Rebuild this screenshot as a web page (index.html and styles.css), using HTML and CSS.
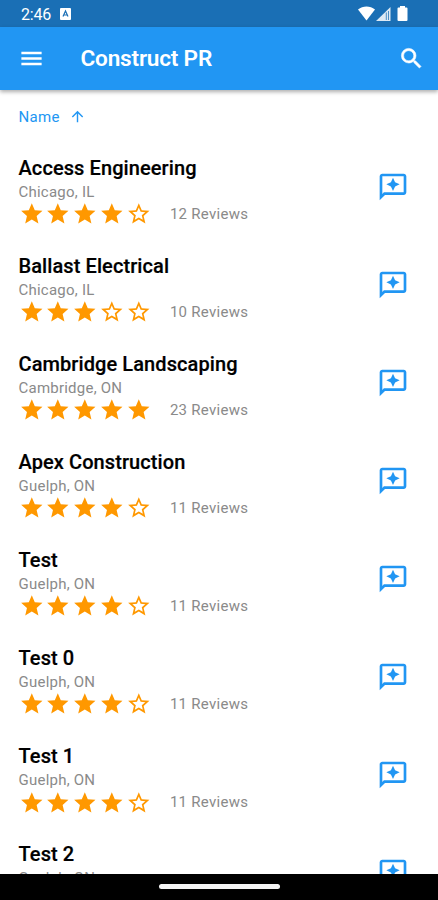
FILE: index.html
```html
<!DOCTYPE html>
<html lang="en">
<head>
<meta charset="utf-8">
<title>Construct PR</title>
<link rel="stylesheet" href="styles.css">
</head>
<body>
<svg class="defs" aria-hidden="true">
  <symbol id="star" viewBox="0 0 24 24"><path d="M12 17.27 18.18 21l-1.64-7.03L22 9.24l-7.19-.61L12 2 9.19 8.63 2 9.24l5.46 4.73L5.82 21z"/></symbol>
  <symbol id="star-o" viewBox="0 0 24 24"><path d="m22 9.24-7.19-.62L12 2 9.19 8.63 2 9.24l5.46 4.73L5.82 21 12 17.27 18.18 21l-1.63-7.03L22 9.24zM12 15.4l-3.76 2.27 1-4.28-3.32-2.88 4.38-.38L12 6.1l1.71 4.04 4.38.38-3.32 2.88 1 4.28L12 15.4z"/></symbol>
  <symbol id="review" viewBox="0 0 24 24"><path d="M20 2H4c-1.1 0-2 .9-2 2v18l4-4h14c1.1 0 2-.9 2-2V4c0-1.1-.9-2-2-2zm0 14H5.17L4 17.17V4h16v12zM12 15l1.57-3.43L17 10l-3.43-1.57L12 5l-1.57 3.43L7 10l3.43 1.57z"/></symbol>
</svg>
<div class="screen">
  <div class="status">
    <span class="clock">2:46</span>
    <svg class="app-badge" viewBox="0 0 11 12"><rect width="11" height="12" rx="1" fill="#fff"/><path d="M3 8.5 5.5 3 8 8.5M4 7h3" fill="none" stroke="#1a6fb5" stroke-width="1.2"/></svg>
    <svg class="signals" viewBox="0 0 50 16">
      <path d="M0 3.6C4.8-.6 12.2-.6 17 3.6L8.500 14.500z" fill="#fff"/>
      <path d="M18 15 32.500 1V15z" fill="#fff" opacity=".85"/>
      <path d="M28.300 6.500V14M30.500 5V14" stroke="#1a6fb5" stroke-width="1" opacity=".75"/>
      <path d="M42 0h5v1.500h1.500q1 0 1 1V14q0 1-1 1h-8q-1 0-1-1V2.500q0-1 1-1H42z" fill="#fff"/>
    </svg>
  </div>
  <header class="appbar">
    <svg class="menu" viewBox="0 0 24 24"><path d="M3 18h18v-2.200H3zm0-4.900h18v-2.200H3zM3 6v2.200h18V6z"/></svg>
    <h1>Construct PR</h1>
    <svg class="search" viewBox="0 0 24 24"><path stroke="currentColor" stroke-width=".5" d="M15.500 14h-.79l-.28-.27A6.471 6.471 0 0 0 16 9.500 6.500 6.500 0 1 0 9.500 16c1.610 0 3.090-.59 4.230-1.570l.27.28v.79l5 4.990L20.490 19l-4.990-5zm-6 0C7.010 14 5 11.990 5 9.500S7.010 5 9.500 5 14 7.010 14 9.500 11.990 14 9.500 14z"/></svg>
  </header>
  <main class="content">
    <div class="sort"><span>Name</span><svg viewBox="0 0 24 24"><path d="m4 12 1.410 1.410L11 7.830V20h2V7.830l5.580 5.590L20 12l-8-8-8 8z"/></svg></div>
    <ul class="list" id="list"></ul>
  </main>
  <footer class="nav"><div class="pill"></div></footer>
</div>
<script src="app.js"></script>
</body>
</html>
```
FILE: styles.css
```css
* { box-sizing: border-box; }
body { margin: 0; font-family: Roboto, sans-serif; background: #fff; }
.defs { display: none; }
svg { display: block; flex: none; fill: currentColor; }
.screen { width: 438px; height: 900px; display: flex; flex-direction: column; overflow: hidden; }
.status { height: 27px; flex: none; display: flex; align-items: center; padding: 1px 30px 0 21px; background: #1a6fb5; color: #fff; }
.clock { font-size: 16px; line-height: 18px; width: 39px; margin-top: 1px; letter-spacing: -.2px; }
.app-badge { width: 11px; height: 12px; }
.signals { width: 50px; height: 16px; margin-left: auto; }
.appbar { height: 62.500px; flex: none; display: flex; align-items: center; padding: 0 13px 0 18px; background: #2196f3; color: #fff; box-shadow: 0 2px 4px rgba(0,0,0,.32); position: relative; }
.menu { width: 27px; height: 27px; }
.appbar h1 { margin: 2px 0 0 35.500px; font-size: 22.600px; line-height: 28px; font-weight: 600; letter-spacing: -.2px; }
.search { width: 27px; height: 27px; margin-left: auto; }
.content { flex: 1; min-height: 0; overflow: hidden; }
.sort { display: flex; align-items: center; height: 54px; padding-left: 18.500px; color: #2196f3; font-size: 15px; letter-spacing: .3px; }
.sort svg { width: 17px; height: 17px; margin-left: 9px; }
.list { margin: 0; padding: 0; list-style: none; }
.row { height: 98.150px; display: flex; justify-content: space-between; padding: 11px 29px 0 18.500px; }
.name { margin: 0; font-size: 20px; line-height: 26px; font-weight: 500; letter-spacing: .09px; color: #000; -webkit-text-stroke: .2px #000; }
.place { font-size: 15px; line-height: 20px; padding-top: 1px; height: 20px; letter-spacing: .23px; color: #8a8a8a; }
.rating { display: flex; align-items: center; height: 26px; }
.stars { display: flex; color: #ff9800; }
.stars svg { width: 25.600px; height: 25.600px; margin-right: 1.200px; }
.count { margin-left: 17.500px; font-size: 15px; letter-spacing: .28px; color: #8a8a8a; }
.review { width: 32px; height: 32px; margin-top: 16px; color: #2196f3; }
.nav { height: 26px; flex: none; background: #000; display: flex; justify-content: center; padding-top: 10px; }
.pill { width: 121px; height: 5px; border-radius: 2.500px; background: #f4f4f4; }
```
FILE: app.js
```js
const companies = [
  ["Access Engineering", "Chicago, IL", 4, 12],
  ["Ballast Electrical", "Chicago, IL", 3, 10],
  ["Cambridge Landscaping", "Cambridge, ON", 5, 23],
  ["Apex Construction", "Guelph, ON", 4, 11],
  ["Test", "Guelph, ON", 4, 11],
  ["Test 0", "Guelph, ON", 4, 11],
  ["Test 1", "Guelph, ON", 4, 11],
  ["Test 2", "Guelph, ON", 4, 11]
];
document.getElementById("list").innerHTML = companies.map(([name, place, stars, count]) => `
  <li class="row">
    <div>
      <h2 class="name">${name}</h2>
      <div class="place">${place}</div>
      <div class="rating">
        <div class="stars">${[1, 2, 3, 4, 5].map(n => `<svg><use href="#${n <= stars ? "star" : "star-o"}"/></svg>`).join("")}</div>
        <span class="count">${count} Reviews</span>
      </div>
    </div>
    <svg class="review"><use href="#review"/></svg>
  </li>`).join("");
```
